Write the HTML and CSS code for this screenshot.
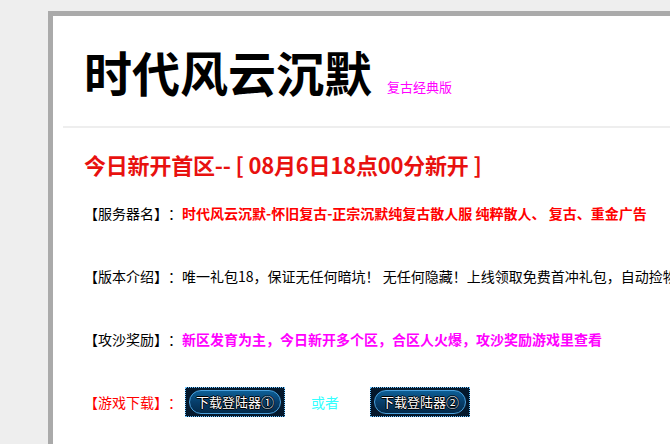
FILE: index.html
```html
<!DOCTYPE html>
<html lang="zh-CN">
<head>
    <meta charset="UTF-8">
    <title>时代风云沉默</title>
    <link rel="stylesheet" href="styles.css">
</head>
<body>
    <div class="page">
        <div class="header">
            <h1>时代风云沉默</h1>
            <span class="edition">复古经典版</span>
        </div>
        <div class="content">
            <h2>今日新开首区-- [ 08月6日18点00分新开 ]</h2>
            <div class="row">
                <span class="label">【服务器名】：</span>
                <span class="value red">时代风云沉默-怀旧复古-正宗沉默纯复古散人服 纯粹散人、 复古、重金广告</span>
            </div>
            <div class="row">
                <span class="label">【版本介绍】：</span>
                <span class="value">唯一礼包18，保证无任何暗坑！ 无任何隐藏！上线领取免费首冲礼包，自动捡物，挂机打金，散人天堂</span>
            </div>
            <div class="row">
                <span class="label">【攻沙奖励】：</span>
                <span class="value pink">新区发育为主，今日新开多个区，合区人火爆，攻沙奖励游戏里查看</span>
            </div>
            <div class="row">
                <span class="label red-label">【游戏下载】：</span>
                <a class="dl-btn" href="#"><span>下载登陆器①</span></a>
                <span class="or">或者</span>
                <a class="dl-btn" href="#"><span>下载登陆器②</span></a>
            </div>
        </div>
    </div>
</body>
</html>
```

FILE: styles.css
```css
html, body {
    margin: 0;
    padding: 0;
    overflow: hidden;
}
body {
    background: #eee;
    font-family: "Noto Sans CJK SC", "Liberation Sans", sans-serif;
    color: #000;
    text-spacing-trim: space-all;
}
.page {
    margin: 11px 0 0 48px;
    width: 1000px;
    min-height: 600px;
    border: 5px solid #aaa;
    background: #fff;
}
.header {
    display: flex;
    align-items: baseline;
    margin: 0 10px;
    padding: 23px 0 23px 21px;
    border-bottom: 2px solid #eee;
}
h1 {
    margin: 0;
    font-size: 48px;
    line-height: 64px;
    font-weight: bold;
}
.edition {
    margin-left: 15px;
    font-size: 13px;
    color: #f0f;
}
.content {
    padding: 20px 0 0 31px;
}
h2 {
    margin: 0;
    font-size: 22px;
    line-height: 32px;
    font-weight: bold;
    color: #e8110f;
    letter-spacing: -0.2px;
}
.row {
    display: flex;
    align-items: center;
    height: 63px;
    font-size: 14px;
    white-space: nowrap;
}
.row:first-of-type {
    margin-top: 1px;
}
.red-label {
    color: #f00;
}
.value.red {
    color: #f00;
    font-weight: bold;
}
.value.pink {
    color: #f0f;
    font-weight: bold;
}
.dl-btn {
    position: relative;
    display: flex;
    align-items: center;
    justify-content: center;
    width: 100px;
    height: 30px;
    box-sizing: border-box;
    margin-left: 3px;
    border: 1px dotted #6cc4ff;
    background: #04182c;
    color: #fff;
    font-size: 13px;
    text-decoration: none;
}
.dl-btn::before {
    content: "";
    position: absolute;
    top: 2px;
    left: 3px;
    right: 3px;
    bottom: 2px;
    border-radius: 13px;
    border: 1px solid #4aa0dc;
    background: linear-gradient(#0d5f96, #073e6b 50%, #042a4a);
}
.dl-btn span {
    position: relative;
    text-shadow: 1px 0 0 #000, -1px 0 0 #000, 0 1px 0 #000, 0 -1px 0 #000;
}
.or {
    margin: 0 28px 0 26px;
    color: #3ff;
    font-size: 14px;
}
```
